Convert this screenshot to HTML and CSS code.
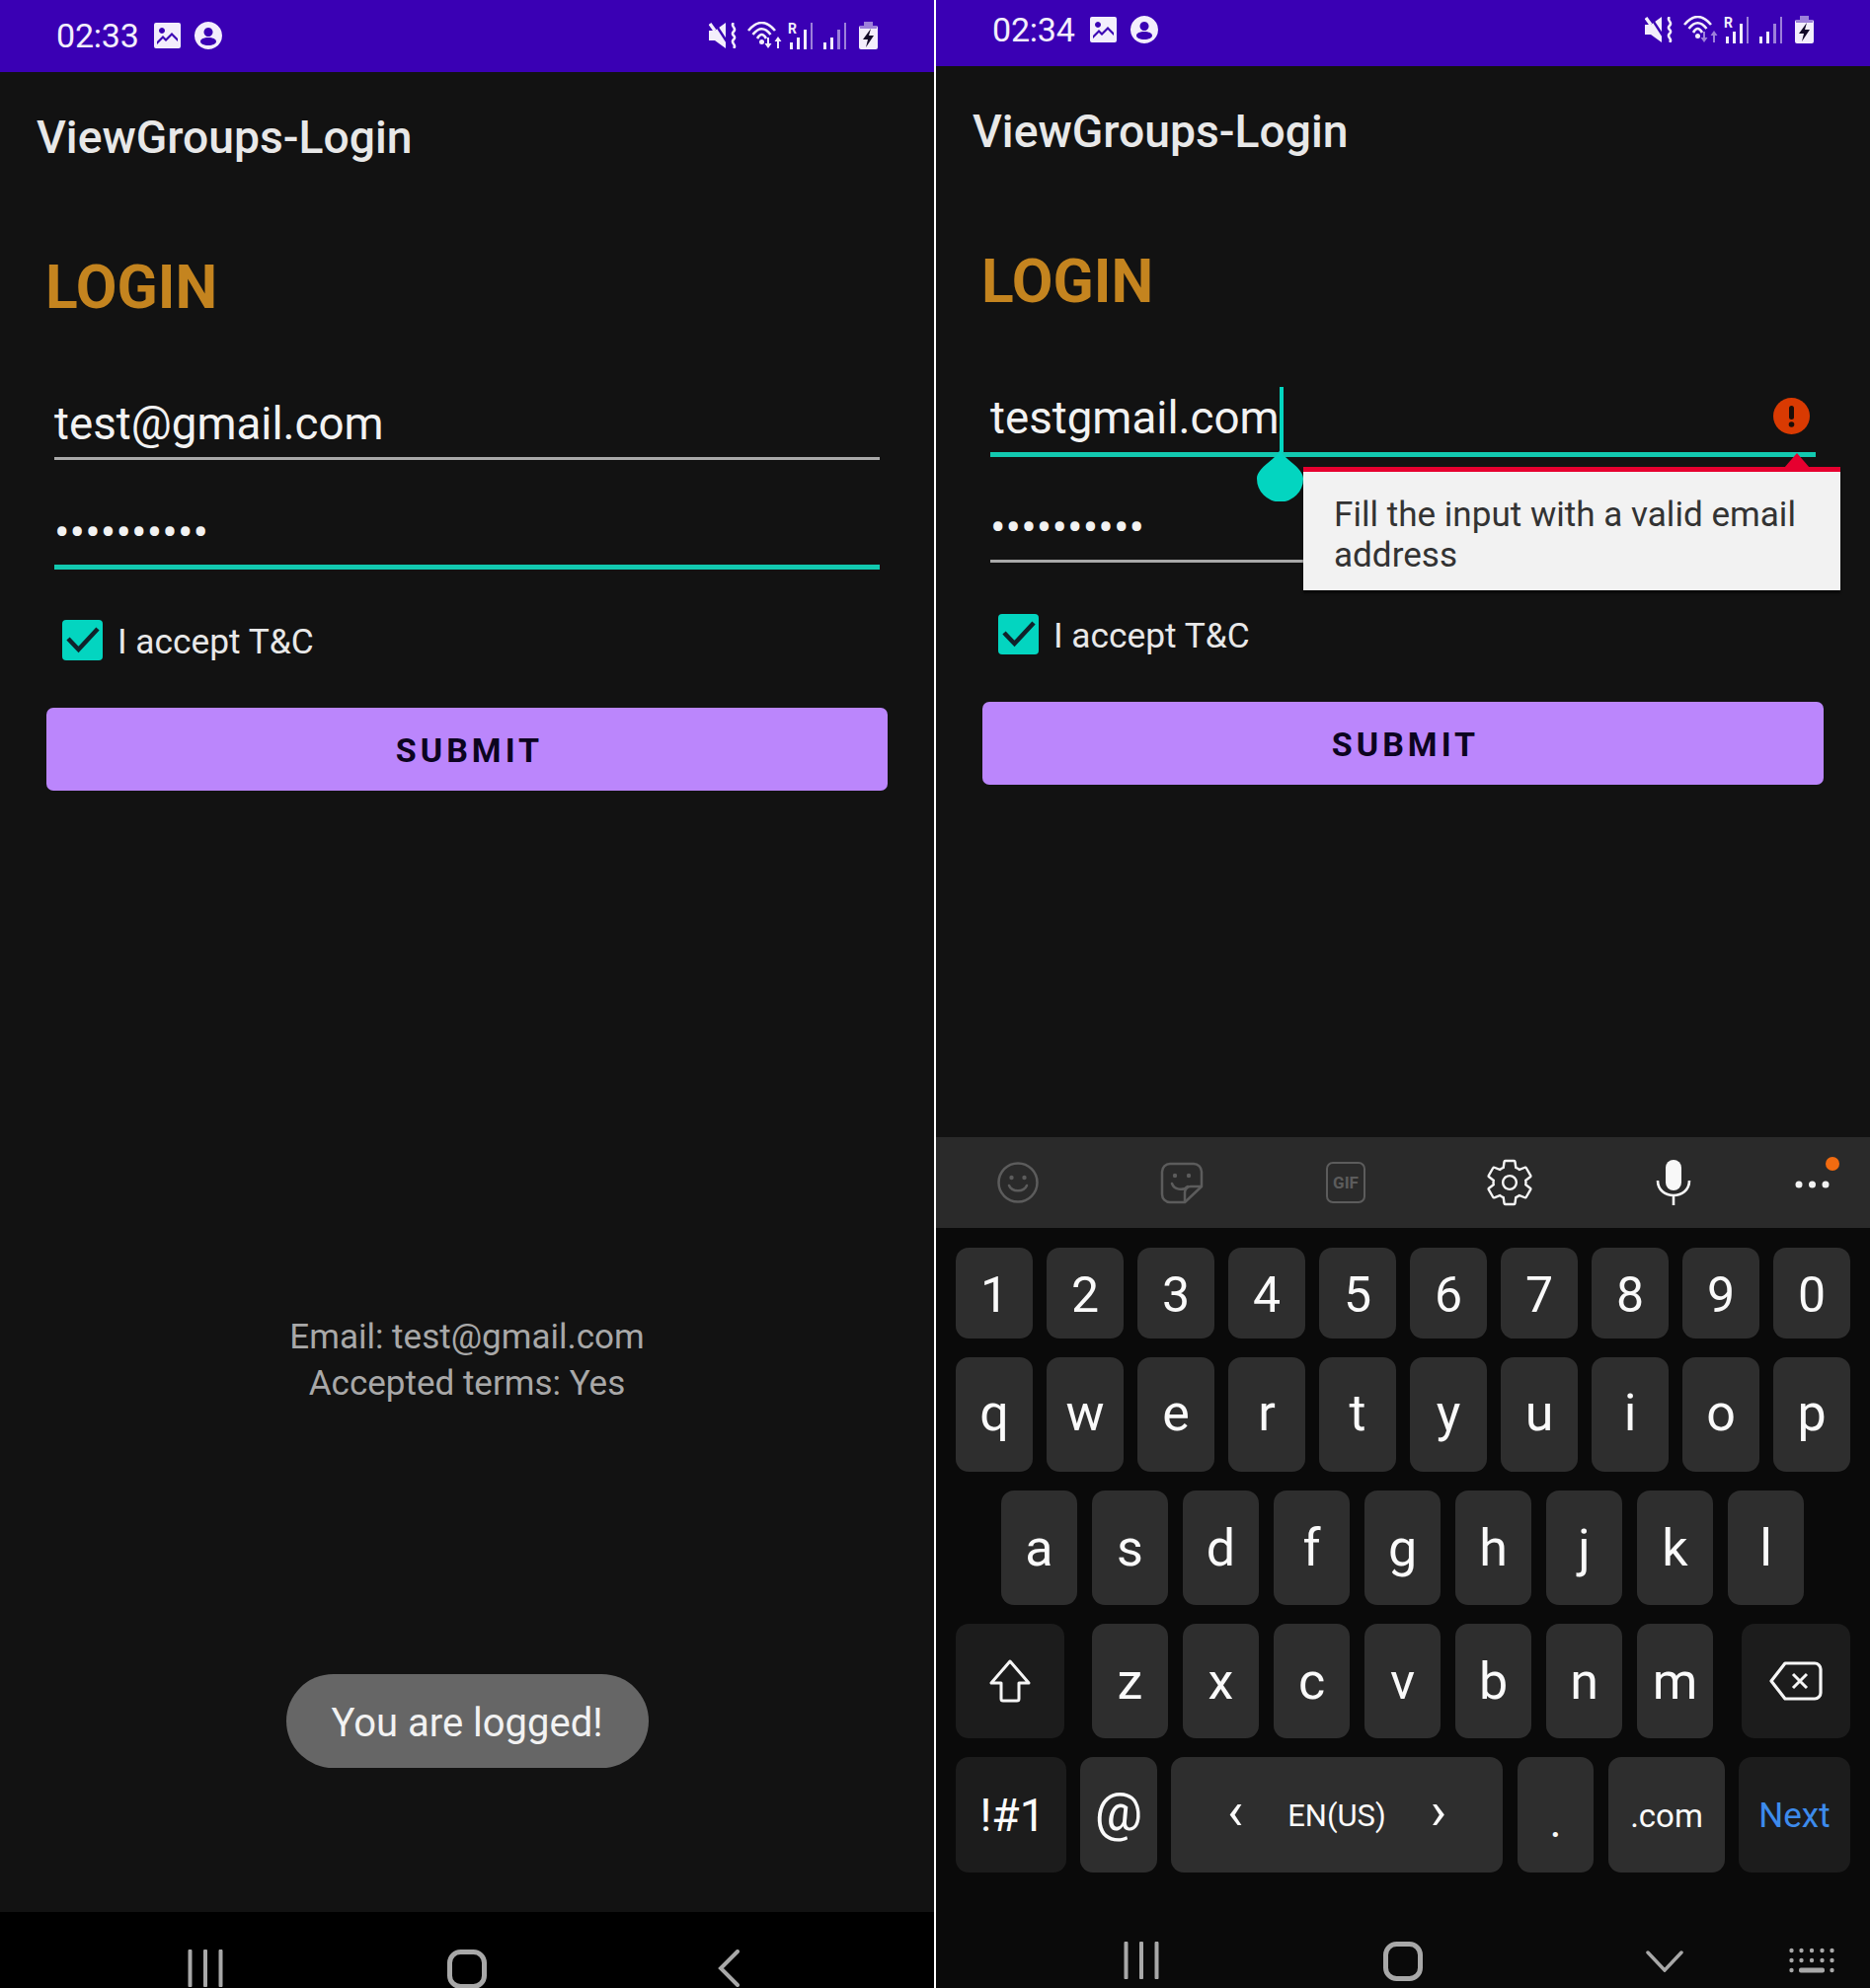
FILE: index.html
```html
<!DOCTYPE html>
<html lang="en">
<head>
<meta charset="utf-8">
<title>ViewGroups-Login</title>
<link rel="stylesheet" href="styles.css">
</head>
<body>
<svg class="defs" aria-hidden="true">
  <symbol id="i-image" viewBox="0 0 27 26"><path fill-rule="evenodd" d="M2 0h23a2 2 0 0 1 2 2v22a2 2 0 0 1-2 2H2a2 2 0 0 1-2-2V2a2 2 0 0 1 2-2zM8 5a3 3 0 1 0 .01 0zM3 19l6-6 3 3 6-6 6 6v3l-6-6-6 6-3-3-6 6z" fill="#f3eefc"/></symbol>
  <symbol id="i-person" viewBox="0 0 28 28"><path fill-rule="evenodd" d="M14 0a14 14 0 1 1-.01 0zM14 6a4.500 4.500 0 1 0 .01 0zM14 16c-4.500 0-8 1.600-8 4s3.500 4 8 4 8-1.600 8-4-3.500-4-8-4z" fill="#f3eefc"/></symbol>
  <symbol id="i-mute" viewBox="0 0 30 26"><path d="M0 8h6l11-8v26L6 18H0z" fill="#f3eefc"/><path d="M25 0c-4 4 4 5 0 9s4 4 0 8 4 5 0 9" fill="none" stroke="#f3eefc" stroke-width="2.600"/><path d="M5-1l13 20" stroke="#3a00b4" stroke-width="2.400"/><path d="M1 1l5 7" stroke="#f3eefc" stroke-width="3.400"/></symbol>
  <symbol id="i-wifi" viewBox="0 0 38 28"><g fill="none" stroke="#f3eefc" stroke-width="2.600"><path d="M1 9Q14.500-7 28 9"/><path d="M5.500 13Q14.500 1.500 23.500 13"/><path d="M10 17Q14.500 9 19 17"/></g><circle cx="14.500" cy="20.500" r="2.500" fill="#f3eefc"/><path class="wifi-arrows" d="M20 16h2v6h2.500L21 27l-3.500-5H20zM30 27h2v-7h2.500L31 15l-3.500 5H30z"/></symbol>
  <symbol id="i-sig-r" viewBox="0 0 26 28"><g fill="#f3eefc"><rect x="3" y="21" width="3" height="7"/><rect x="10" y="16" width="3" height="12"/><rect x="17" y="8" width="3" height="20"/></g><rect x="24" y="1" width="2" height="27" fill="#9d80da"/></symbol>
  <symbol id="i-sig" viewBox="0 0 26 28"><g fill="#f3eefc"><rect x="1" y="21" width="3" height="7"/><rect x="8" y="16" width="3" height="12"/></g><g fill="#9d80da"><rect x="15" y="8" width="3" height="20"/><rect x="22" y="1" width="2" height="27"/></g></symbol>
  <symbol id="i-bat" viewBox="0 0 19 28"><path d="M5 0h9v5H5z" fill="#9d80da"/><rect y="4" width="19" height="24" rx="2" fill="#f3eefc"/><path d="M1 4h17v3H1z" fill="#9d80da"/><path d="M12 7L4 18h5l-2 8 8-12h-5z" fill="#120a28"/></symbol>
  <symbol id="i-check" viewBox="0 0 41 41"><path d="M6 19l10.500 11L36 9" fill="none" stroke="#10222a" stroke-width="4.500"/></symbol>
  <symbol id="i-bars" viewBox="0 0 36 38"><path d="M2.500 1.500v35M18 1.500v35M33.500 1.500v35" stroke="#a8a8a8" stroke-width="4" stroke-linecap="round"/></symbol>
  <symbol id="i-home" viewBox="0 0 40 40"><rect x="2.500" y="2.500" width="35" height="35" rx="11" fill="none" stroke="#a8a8a8" stroke-width="5"/></symbol>
  <symbol id="i-back" viewBox="0 0 22 38"><path d="M20 2L3 19l17 17" fill="none" stroke="#a8a8a8" stroke-width="4" stroke-linecap="round"/></symbol>
</svg>
<main class="screens">
  <section class="phone phone-left">
    <header class="status status-left">
      <span class="clock">02:33</span>
      <svg class="si si-image"><use href="#i-image"/></svg>
      <svg class="si si-person"><use href="#i-person"/></svg>
      <span class="status-gap"></span>
      <svg class="si si-mute"><use href="#i-mute"/></svg>
      <svg class="si si-wifi"><use href="#i-wifi"/></svg>
      <span class="si-r-wrap"><span class="roam">R</span><svg class="si si-sig"><use href="#i-sig-r"/></svg></span>
      <svg class="si si-sig"><use href="#i-sig"/></svg>
      <svg class="si si-bat"><use href="#i-bat"/></svg>
    </header>
    <div class="appbar">ViewGroups-Login</div>
    <div class="form">
      <h1 class="heading">LOGIN</h1>
      <div class="field field-first"><span class="field-text">test@gmail.com</span></div>
      <div class="field field-second field-active"><span class="dots">••••••••••</span></div>
      <label class="accept">
        <span class="box"><svg class="check"><use href="#i-check"/></svg></span>
        <span class="accept-label">I accept T&amp;C</span>
      </label>
      <div class="submit">SUBMIT</div>
    </div>
    <p class="result">Email: test@gmail.com<br>Accepted terms: Yes</p>
    <div class="toast">You are logged!</div>
    <nav class="nav nav-left">
      <svg class="nv nv-bars"><use href="#i-bars"/></svg>
      <svg class="nv nv-home"><use href="#i-home"/></svg>
      <svg class="nv nv-back"><use href="#i-back"/></svg>
    </nav>
  </section>

  <section class="phone phone-right">
    <header class="status status-right">
      <span class="clock">02:34</span>
      <svg class="si si-image"><use href="#i-image"/></svg>
      <svg class="si si-person"><use href="#i-person"/></svg>
      <span class="status-gap"></span>
      <svg class="si si-mute"><use href="#i-mute"/></svg>
      <svg class="si si-wifi"><use href="#i-wifi"/></svg>
      <span class="si-r-wrap"><span class="roam">R</span><svg class="si si-sig"><use href="#i-sig-r"/></svg></span>
      <svg class="si si-sig"><use href="#i-sig"/></svg>
      <svg class="si si-bat"><use href="#i-bat"/></svg>
    </header>
    <div class="appbar">ViewGroups-Login</div>
    <div class="form">
      <h1 class="heading">LOGIN</h1>
      <div class="field field-first field-focus">
        <span class="field-text">testgmail.com</span>
        <span class="cursor"></span>
        <svg class="handle" viewBox="0 0 47 53"><path d="M23.500 0C26 10 47 18 47 30a23.500 23.500 0 0 1-47 0C0 18 21 10 23.500 0z" fill="#03d5c0"/></svg>
        <svg class="err" viewBox="0 0 37 37"><circle cx="18.500" cy="18.500" r="18.500" fill="#d93a02"/><rect x="16" y="8" width="5" height="14" rx="2.500" fill="#1a0d08"/><circle cx="18.500" cy="27" r="2.800" fill="#1a0d08"/></svg>
        <div class="popup">
          <svg class="popup-tip" viewBox="0 0 26 15"><path d="M13 0l13 15H0z" fill="#e6002f"/></svg>
          Fill the input with a valid email address
        </div>
      </div>
      <div class="field field-second field-after"><span class="dots">••••••••••</span></div>
      <label class="accept accept-right">
        <span class="box"><svg class="check"><use href="#i-check"/></svg></span>
        <span class="accept-label">I accept T&amp;C</span>
      </label>
      <div class="submit">SUBMIT</div>
    </div>
    <div class="keyboard">
      <div class="kb-tools">
        <svg class="tool" viewBox="0 0 48 48"><g fill="none" stroke="#5c5c5c" stroke-width="2.500"><circle cx="24" cy="24" r="19.500"/><path d="M15 27c3 7 15 7 18 0" stroke-linecap="round"/></g><circle cx="17.500" cy="19" r="2.200" fill="#5c5c5c"/><circle cx="30.500" cy="19" r="2.200" fill="#5c5c5c"/></svg>
        <svg class="tool" viewBox="0 0 48 48"><g fill="none" stroke="#5c5c5c" stroke-width="2.500" stroke-linejoin="round"><path d="M12 5h24a8 8 0 0 1 8 8v15L27 44H12a8 8 0 0 1-8-8V13a8 8 0 0 1 8-8z"/><path d="M44 28H33a6 6 0 0 0-6 6v10"/><path d="M14 25c2 6 11 8 16 3" stroke-linecap="round"/></g><circle cx="17" cy="17" r="2.200" fill="#5c5c5c"/><circle cx="31" cy="17" r="2.200" fill="#5c5c5c"/></svg>
        <span class="tool tool-gif">GIF</span>
        <svg class="tool" viewBox="1.500 1.500 21 21"><path d="M19.140 12.940c.04-.3.060-.61.060-.94 0-.32-.02-.64-.07-.94l2.030-1.580a.49.49 0 0 0 .12-.61l-1.920-3.320a.488.488 0 0 0-.59-.22l-2.390.96c-.5-.38-1.030-.7-1.620-.94l-.36-2.540a.484.484 0 0 0-.48-.41h-3.840c-.24 0-.43.17-.47.41l-.36 2.540c-.59.24-1.130.57-1.620.94l-2.390-.96c-.22-.08-.47 0-.59.22L2.740 8.870c-.12.21-.08.47.12.61l2.030 1.580c-.05.3-.09.63-.09.94s.02.64.07.94l-2.030 1.580a.49.49 0 0 0-.12.61l1.920 3.320c.12.22.37.29.59.22l2.390-.96c.5.38 1.030.7 1.620.94l.36 2.540c.05.24.24.41.48.41h3.840c.24 0 .44-.17.47-.41l.36-2.540c.59-.24 1.130-.56 1.620-.94l2.390.96c.22.08.47 0 .59-.22l1.920-3.320c.12-.22.07-.47-.12-.61l-2.010-1.580z" fill="none" stroke="#f5f5f5" stroke-width="1.050"/><circle cx="12" cy="12" r="3" fill="none" stroke="#f5f5f5" stroke-width="1.050"/></svg>
        <svg class="tool" viewBox="0 0 48 48"><rect x="16" y="1" width="16" height="31" rx="8" fill="#f8f8f8"/><path d="M8 22c0 20 32 20 32 0M24 36v11" fill="none" stroke="#f8f8f8" stroke-width="2.600"/></svg>
        <span class="tool tool-more">
          <svg class="more-dots" viewBox="0 0 48 48"><circle cx="9" cy="26" r="3.500" fill="#f2f2f2"/><circle cx="22.500" cy="26" r="3.500" fill="#f2f2f2"/><circle cx="36" cy="26" r="3.500" fill="#f2f2f2"/></svg>
          <span class="more-dot"></span>
        </span>
      </div>
      <div class="kb-keys">
        <div class="row row-num">
          <span class="key num">1</span><span class="key num">2</span><span class="key num">3</span><span class="key num">4</span><span class="key num">5</span><span class="key num">6</span><span class="key num">7</span><span class="key num">8</span><span class="key num">9</span><span class="key num">0</span>
        </div>
        <div class="row row-q">
          <span class="key">q</span><span class="key">w</span><span class="key">e</span><span class="key">r</span><span class="key">t</span><span class="key">y</span><span class="key">u</span><span class="key">i</span><span class="key">o</span><span class="key">p</span>
        </div>
        <div class="row row-mid">
          <span class="key">a</span><span class="key">s</span><span class="key">d</span><span class="key">f</span><span class="key">g</span><span class="key">h</span><span class="key">j</span><span class="key">k</span><span class="key">l</span>
        </div>
        <div class="row row-shift">
          <span class="key key-fn key-side">
            <svg class="key-ic" viewBox="0 0 44 44"><path d="M22 2L3 24h10v16a2 2 0 0 0 2 2h14a2 2 0 0 0 2-2V24h10z" fill="none" stroke="#f5f5f5" stroke-width="3" stroke-linejoin="round"/></svg>
          </span>
          <span class="letters">
            <span class="key">z</span><span class="key">x</span><span class="key">c</span><span class="key">v</span><span class="key">b</span><span class="key">n</span><span class="key">m</span>
          </span>
          <span class="key key-fn key-side">
            <svg class="key-ic key-del" viewBox="0 0 54 40"><path d="M16 2h30a6 6 0 0 1 6 6v24a6 6 0 0 1-6 6H16L2 20z" fill="none" stroke="#f5f5f5" stroke-width="3.200" stroke-linejoin="round"/><path d="M24 13l14 14M38 13L24 27" stroke="#f5f5f5" stroke-width="3"/></svg>
          </span>
        </div>
        <div class="row row-bottom">
          <span class="key key-fn key-sym">!#1</span>
          <span class="key key-at">@</span>
          <span class="key key-space"><span class="angle">‹</span><span class="lang">EN(US)</span><span class="angle">›</span></span>
          <span class="key key-dot">.</span>
          <span class="key key-com">.com</span>
          <span class="key key-fn key-next">Next</span>
        </div>
      </div>
      <nav class="nav nav-right">
        <svg class="nv nv-bars"><use href="#i-bars"/></svg>
        <svg class="nv nv-home"><use href="#i-home"/></svg>
        <svg class="nv nv-down" viewBox="0 0 38 22"><path d="M2 2l17 18L36 2" fill="none" stroke="#a8a8a8" stroke-width="3.500" stroke-linecap="round"/></svg>
        <svg class="nv nv-kbd" viewBox="0 0 46 26"><g fill="#a8a8a8"><circle cx="2.500" cy="3" r="2.200"/><circle cx="12.500" cy="3" r="2.200"/><circle cx="23" cy="3" r="2.200"/><circle cx="33.500" cy="3" r="2.200"/><circle cx="43.500" cy="3" r="2.200"/><circle cx="2.500" cy="13" r="2.200"/><circle cx="12.500" cy="13" r="2.200"/><circle cx="23" cy="13" r="2.200"/><circle cx="33.500" cy="13" r="2.200"/><circle cx="43.500" cy="13" r="2.200"/><circle cx="2.500" cy="23" r="2.200"/><rect x="10" y="20.500" width="26" height="5" rx="2"/><circle cx="43.500" cy="23" r="2.200"/></g></svg>
      </nav>
    </div>
  </section>
</main>
</body>
</html>
```
FILE: styles.css
```css
* { box-sizing: border-box; }
html, body { margin: 0; padding: 0; background: #fff; }
body { width: 1894px; height: 2014px; overflow: hidden; font-family: Roboto, "Noto Sans", sans-serif; }
.defs { display: none; }
.screens { display: flex; justify-content: space-between; height: 2014px; }
.phone { width: 946px; height: 2014px; background: #121212; display: flex; flex-direction: column; overflow: hidden; }

.status { display: flex; align-items: center; background: #3a00b4; color: #f3eefc; padding: 0 57px 0 57px; flex: none; }
.status-left { height: 73px; padding-bottom: 1px; }
.status-right { height: 67px; padding-bottom: 7px; }
.status-right .si-wifi { --arrow: #9d80da; }
.wifi-arrows { fill: var(--arrow, #f3eefc); }
.clock { font-size: 34px; width: 84px; margin-right: 15px; letter-spacing: -.2px; }
.si { display: block; flex: none; }
.si-image { width: 27px; height: 26px; margin-right: 14px; }
.si-person { width: 28px; height: 28px; }
.status-gap { flex: 1; }
.si-mute { width: 30px; height: 26px; margin-right: 9px; }
.si-wifi { width: 38px; height: 28px; margin-right: 2px; }
.si-sig { width: 26px; height: 28px; }
.si-r-wrap { position: relative; width: 26px; height: 28px; margin-right: 10px; }
.roam { position: absolute; left: 1px; top: 0; font-size: 14px; font-weight: 700; line-height: 14px; }
.si-bat { width: 19px; height: 28px; margin-left: 11px; }

.appbar { height: 130px; flex: none; padding: 2px 0 0 37px; display: flex; align-items: center; font-size: 46.250px; font-weight: 500; color: #e8e8e8; }

.form { padding: 0 47px; display: flex; flex-direction: column; flex: none; }
.heading { margin: 52px 0 0 -1px; padding-top: 1px; height: 72px; font-size: 60.500px; line-height: 72px; font-weight: 700; color: #c4841f; }
.field { position: relative; margin: 0 8px; border-bottom: 3px solid #a9a9a9; display: flex; align-items: center; }
.field-first { height: 139px; padding-top: 69px; }
.field-second { height: 111px; padding-top: 40px; }
.field-active { border-bottom: 5px solid #12c9b0; }
.field-focus { height: 141.500px; padding-top: 70px; border-bottom: 5px solid #12c9b0; }
.field-after { height: 107px; padding-top: 38px; }
.field-text { font-size: 45.700px; color: #f2f2f2; line-height: 60px; }
.dots { font-size: 46px; color: #f2f2f2; letter-spacing: .1px; line-height: 60px; }

.accept { display: flex; align-items: center; margin: 51px 0 0 16px; height: 41px; font-size: 35.300px; color: #e8e8e8; }
.accept-right { margin-top: 52px; }
.accept-label { padding-top: 3px; }
.box { width: 41px; height: 41px; border-radius: 4px; background: #03d5c0; margin-right: 15px; display: block; }
.check { display: block; width: 41px; height: 41px; }

.submit { margin-top: 48px; height: 84px; border-radius: 7px; background: #bb86fc; display: flex; align-items: center; justify-content: center; padding: 2px 0 0 5px; font-size: 34px; font-weight: 700; letter-spacing: 4px; color: #0c0420; }

.result { margin: 0; padding-top: 530px; text-align: center; font-size: 35px; line-height: 47px; color: #a8a8a8; flex: none; }
.toast { align-self: center; margin-top: 271px; width: 367px; height: 95px; border-radius: 48px; background: #666; color: #f2f2f2; display: flex; align-items: center; justify-content: center; padding-top: 3px; font-size: 40px; flex: none; }

.nav { display: grid; grid-template-columns: 265px 265px 265px 46px; padding-left: 75px; justify-items: center; align-items: start; margin-top: auto; flex: none; }
.nav-left { height: 77px; padding-top: 38px; background: #000; }
.nav-right { height: 117px; padding-top: 70px; background: #0a0a0a; }
.nv { display: block; }
.nv-bars { width: 36px; height: 38px; }
.nv-home { width: 40px; height: 40px; }
.nv-back { width: 22px; height: 38px; }
.nv-down { width: 38px; height: 22px; margin-top: 9px; }
.nv-kbd { width: 46px; height: 26px; margin: 6px 0 0 -13px; }

.cursor { position: absolute; left: 293px; top: 71px; width: 3.500px; height: 66px; background: #03d5c0; }
.handle { position: absolute; left: 270px; top: 134px; width: 47px; height: 53px; z-index: 2; }
.err { position: absolute; right: 6px; top: 82px; width: 37px; height: 37px; }
.popup { position: absolute; left: 317px; top: 152px; width: 544px; height: 125px; background: #f2f2f2; border-top: 5px solid #e6002f; padding: 23px 24px 0 31px; font-size: 35.100px; line-height: 41px; color: #333; z-index: 1; box-shadow: 0 3px 2px rgba(0,0,0,.5); }
.popup-tip { position: absolute; left: 487px; top: -19px; width: 26px; height: 15px; display: block; }

.keyboard { margin-top: auto; background: #0a0a0a; flex: none; display: flex; flex-direction: column; }
.kb-tools { height: 92px; background: #2a2a2a; display: grid; grid-template-columns: repeat(6, 166px); justify-items: center; align-items: center; }
.tool { display: block; width: 48px; height: 48px; position: relative; }
.tool-gif { width: 40px; height: 42px; border: 2.500px solid #5c5c5c; border-radius: 7px; color: #5c5c5c; font-size: 17px; font-weight: 700; display: flex; align-items: center; justify-content: center; }
.tool-more { margin-right: 48px; }
.more-dots { display: block; width: 48px; height: 48px; }
.more-dot { position: absolute; left: 36px; top: -2px; width: 14px; height: 14px; border-radius: 50%; background: #f26b10; }

.kb-keys { display: flex; flex-direction: column; gap: 19px; padding: 20px 20px 0; }
.row { display: flex; gap: 14px; height: 116px; }
.row-num { height: 92px; }
.row-q .key { padding-bottom: 3px; }
.row-mid { justify-content: center; gap: 15px; padding-right: 1px; }
.row-shift { justify-content: space-between; }
.letters { display: flex; gap: 15px; margin-left: -1px; }
.row-bottom { height: 117px; }
.key { width: 78px; flex: none; border-radius: 13px; background: #2e2e2e; color: #fafafa; display: flex; align-items: center; justify-content: center; font-size: 52px; }
.row-mid .key, .letters .key { width: 77px; }
.num { font-size: 50px; padding-top: 3px; }
.key-fn { background: #1c1c1c; }
.key-side { width: 110px; }
.key-ic { display: block; width: 44px; height: 44px; }
.key-del { width: 54px; height: 40px; }
.key-sym { width: 112px; font-size: 46px; padding-left: 3px; }
.key-at { width: 78px; font-size: 54px; padding-bottom: 6px; }
.key-space { width: 336px; gap: 45px; }
.angle { font-size: 54px; line-height: 48px; margin-top: -8px; }
.lang { font-size: 31px; padding-top: 2px; }
.key-dot { width: 77px; margin: 0 1px; font-size: 46px; padding-top: 12px; }
.key-com { width: 118px; font-size: 33px; padding-top: 2px; }
.key-next { width: 113px; font-size: 35px; color: #3d8bec; padding-top: 2px; }
```
